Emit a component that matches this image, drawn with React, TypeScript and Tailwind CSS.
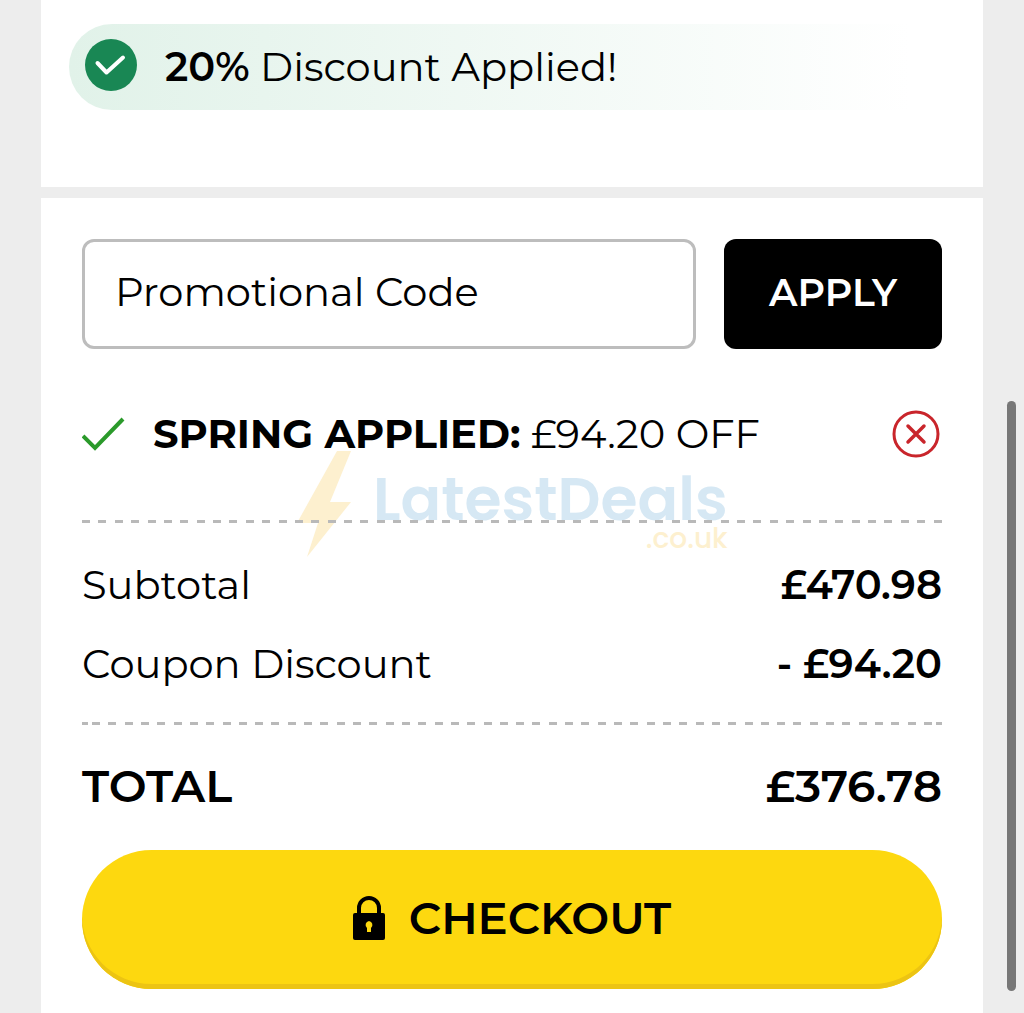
import type { ReactNode } from 'react';

function Dashes({ count }: { count: number }) {
  return (
    <div className="flex flex-1 justify-between">
      {Array.from({ length: count }).map((_, i) => (
        <span key={i} className="h-[3px] w-2 bg-[#b9b9b9]" />
      ))}
    </div>
  );
}

function DashedLine({ capped, children }: { capped?: boolean; children?: ReactNode }) {
  return (
    <div className="relative">
      {children}
      <div aria-hidden="true" className="relative flex gap-1">
        {capped && <span className="h-[3px] w-1.5 bg-[#b9b9b9]" />}
        <Dashes count={capped ? 52 : 53} />
        {capped && <span className="h-[3px] w-1.5 bg-[#b9b9b9]" />}
      </div>
    </div>
  );
}

function Watermark() {
  return (
    <div className="pointer-events-none absolute bottom-[-34px] left-1/4 flex">
      <svg aria-hidden="true" width="56" height="108" viewBox="0 0 56 108" fill="#fdf0cf">
        <path d="M40 2H54L33 53H54L10 108L21 74H0Z" />
      </svg>
      <div className="ml-5 flex flex-col items-end font-[Poppins,Inter,sans-serif]">
        <span className="mt-5 text-[60px] leading-[60px] font-semibold text-[#d6e8f4]">LatestDeals</span>
        <span className="text-[28px] leading-5 font-medium text-[#fdf0cf]">.co.uk</span>
      </div>
    </div>
  );
}

function Row({ label, value }: { label: string; value: string }) {
  return (
    <div className="flex items-center justify-between text-[40px] leading-10">
      <dt>{label}</dt>
      <dd className="font-semibold">{value}</dd>
    </div>
  );
}

export default function App() {
  return (
    <div className="relative flex min-h-screen flex-col gap-[11px] bg-[#ededed] px-[41px] font-[Montserrat,Inter,sans-serif] text-black">
      <section className="bg-white px-7 pt-6 pb-[77px]">
        <div className="flex h-[86px] items-center gap-7 rounded-l-full bg-linear-to-r from-[#e1f2e9] to-white to-95% px-4">
          <svg aria-hidden="true" className="mb-1" width="52" height="52" viewBox="0 0 52 52">
            <circle cx="26" cy="26" r="26" fill="#198754" />
            <path
              d="M12.5 24L21.5 33.5L38 18.5"
              fill="none"
              stroke="#fff"
              strokeWidth="4"
              strokeLinecap="round"
              strokeLinejoin="round"
            />
          </svg>
          <p className="text-[40px] leading-10">
            <strong className="font-semibold">20%</strong> Discount Applied!
          </p>
        </div>
      </section>

      <section className="flex-1 bg-white px-[41px] pt-[41px] pb-6">
        <form className="flex gap-7" onSubmit={(e) => e.preventDefault()}>
          <input
            type="text"
            aria-label="Promotional Code"
            placeholder="Promotional Code"
            className="h-[110px] min-w-0 flex-1 rounded-xl border-[3px] border-[#bdbdbd] px-[30px] pb-1.5 text-[40px] placeholder:text-black"
          />
          <button
            type="submit"
            className="h-[110px] w-[218px] rounded-xl bg-black pb-1 text-[38px] font-semibold text-white"
          >
            APPLY
          </button>
        </form>

        <div className="mt-[61px] flex h-12 items-center">
          <svg aria-hidden="true" width="43" height="34" viewBox="0 0 43 34" fill="none" stroke="#2b9a2b" strokeWidth="4">
            <path d="M1 19L13 31L41 2" />
          </svg>
          <p className="ml-7 flex-1 text-[40px] leading-10">
            <strong className="font-bold">SPRING APPLIED:</strong> £94.20 OFF
          </p>
          <button type="button" aria-label="Remove code">
            <svg width="50" height="50" viewBox="0 0 50 50" fill="none" stroke="#c9252b" strokeWidth="3" strokeLinecap="round">
              <circle cx="24" cy="25" r="22" />
              <path d="M16 17L32 33M32 17L16 33" strokeWidth="3.5" />
            </svg>
          </button>
        </div>

        <div className="mt-[62px]">
          <DashedLine>
            <Watermark />
          </DashedLine>
        </div>

        <dl className="mt-[42px] mb-[38px] flex flex-col gap-[39px]">
          <Row label="Subtotal" value="£470.98" />
          <Row label="Coupon Discount" value="- £94.20" />
        </dl>

        <DashedLine capped />

        <div className="mt-[39px] flex items-center justify-between text-[45px] leading-[44px] font-semibold">
          <span>TOTAL</span>
          <span>£376.78</span>
        </div>

        <button
          type="button"
          className="mt-[42px] flex h-[139px] w-full items-center justify-center gap-6 rounded-full bg-[#fdd80f] pb-1 text-[45px] font-semibold shadow-[inset_0_-5px_0_#ecc413]"
        >
          <svg aria-hidden="true" width="32" height="44" viewBox="0 0 32 44">
            <path d="M6 20V12a10 10 0 0 1 20 0v8" fill="none" stroke="#000" strokeWidth="4" />
            <rect y="17" width="32" height="27" rx="2" fill="#000" />
            <path d="M16 25a4 4 0 0 1 2 7v4h-4v-4a4 4 0 0 1 2-7Z" fill="#fdd80f" />
          </svg>
          CHECKOUT
        </button>
      </section>

      <div aria-hidden="true" className="absolute right-2 bottom-[22px] h-[590px] w-[9px] rounded-full bg-[#777]" />
    </div>
  );
}
